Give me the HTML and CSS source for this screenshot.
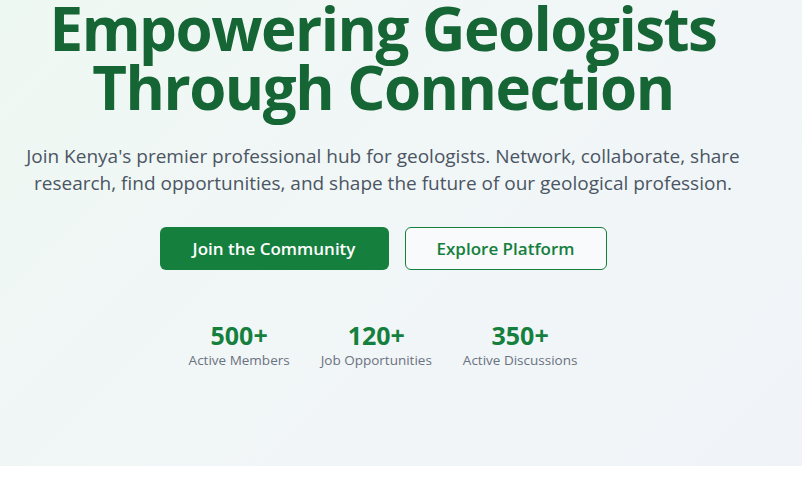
FILE: index.html
```html
<!DOCTYPE html>
<html lang="en">
<head>
<meta charset="utf-8">
<title>Empowering Geologists</title>
<link rel="stylesheet" href="styles.css">
</head>
<body>
<section class="hero">
  <div class="hero-inner">
    <h1 class="title">Empowering Geologists<br>Through Connection</h1>
    <p class="lead">Join Kenya's premier professional hub for geologists. Network, collaborate, share research, find opportunities, and shape the future of our geological profession.</p>
    <div class="actions">
      <a class="btn btn-primary" href="#">Join the Community</a>
      <a class="btn btn-outline" href="#">Explore Platform</a>
    </div>
    <div class="stats">
      <div class="stat"><div class="stat-num">500+</div><div class="stat-label">Active Members</div></div>
      <div class="stat"><div class="stat-num">120+</div><div class="stat-label">Job Opportunities</div></div>
      <div class="stat"><div class="stat-num">350+</div><div class="stat-label">Active Discussions</div></div>
    </div>
  </div>
</section>
</body>
</html>
```
FILE: styles.css
```css
* { box-sizing: border-box; }
html, body { margin: 0; padding: 0; background: #fff; }
body { font-family: "Open Sans", "Noto Sans", sans-serif; }
.hero {
  height: 466px;
  background: linear-gradient(135deg, #eef8f2 0%, #f1f6f7 45%, #f0f4f8 100%);
  overflow: hidden;
}
.hero-inner {
  width: 766px;
  display: flex;
  flex-direction: column;
  align-items: center;
  text-align: center;
}
.title {
  margin: -1px 0 0;
  font-size: 60px;
  line-height: 59px;
  font-weight: 700;
  color: #166534;
  letter-spacing: -1.5px;
}
.lead {
  margin: 26px 0 0;
  font-size: 19px;
  line-height: 27px;
  color: #4b5563;
  width: 730px;
}
.actions {
  display: flex;
  gap: 16px;
  margin-top: 30px;
}
.btn {
  display: flex;
  align-items: center;
  justify-content: center;
  height: 43px;
  border-radius: 6px;
  font-size: 17px;
  font-weight: 600;
  text-decoration: none;
}
.btn-primary { width: 229px; background: #15803d; color: #fff; }
.btn-outline { width: 202px; background: #f8fafc; color: #15803d; border: 1px solid #15803d; }
.stats {
  display: flex;
  gap: 31px;
  margin-top: 50px;
}
.stat { display: flex; flex-direction: column; align-items: center; }
.stat-num { font-size: 25px; line-height: 30px; font-weight: 700; color: #15803d; }
.stat-label { font-size: 13.5px; line-height: 20px; color: #6b7280; }
```
